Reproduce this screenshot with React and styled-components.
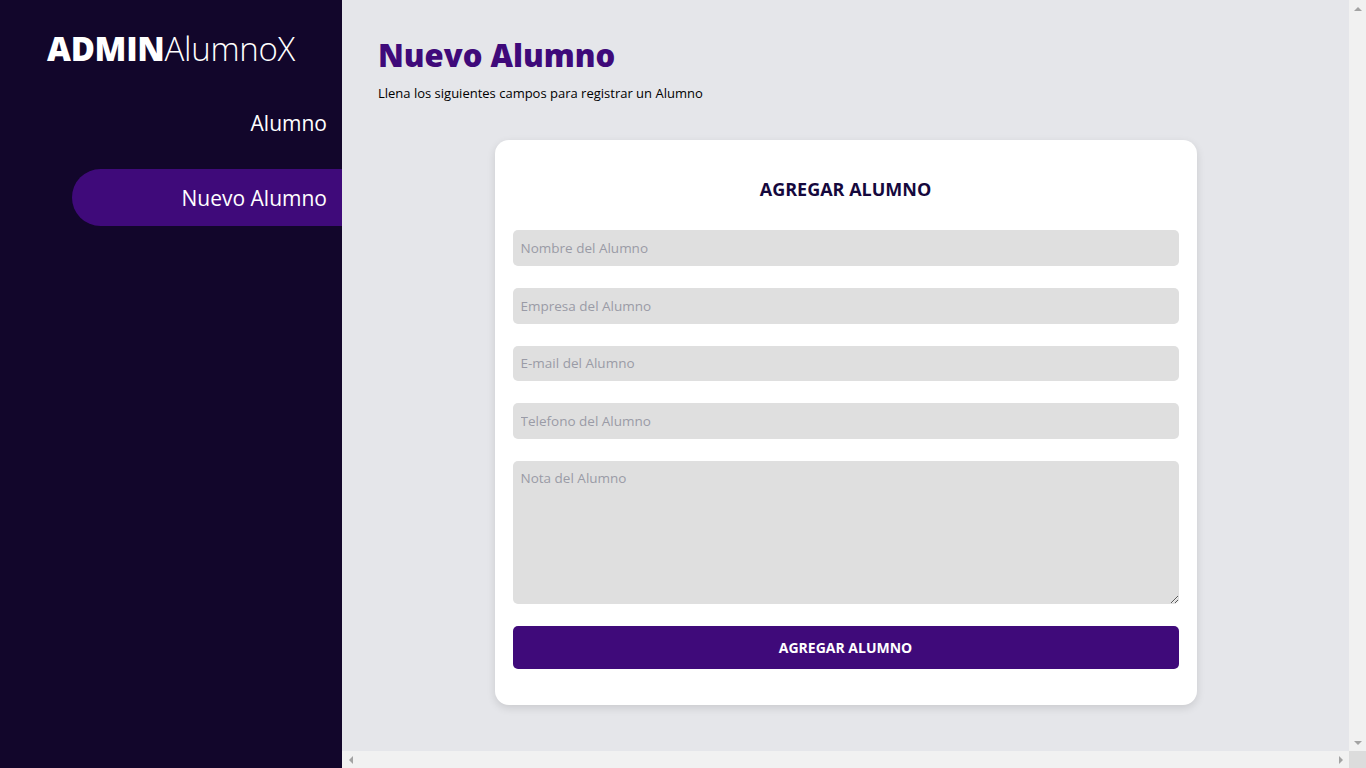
import React from "react";
import styled, { createGlobalStyle } from "styled-components";

const GlobalStyle = createGlobalStyle`
  * {
    box-sizing: border-box;
  }
  body {
    margin: 0;
    font-family: "Open Sans", "Noto Sans", sans-serif;
  }
`;

const Layout = styled.div`
  display: flex;
  height: 100vh;
  overflow: hidden;
`;

const Sidebar = styled.aside`
  width: 342px;
  flex-shrink: 0;
  background: #12062b;
  color: #fff;
  padding-top: 28px;
  .logo {
    text-align: center;
    font-size: 33px;
    font-weight: 300;
    line-height: 42px;
    letter-spacing: -0.3px;
    margin: 0 0 24px;
    span {
      font-weight: 800;
    }
  }
`;

const NavList = styled.nav`
  display: flex;
  flex-direction: column;
  align-items: flex-end;
  gap: 18px;
`;

const NavItem = styled.a`
  display: flex;
  align-items: center;
  justify-content: flex-end;
  width: 270px;
  height: 57px;
  padding-right: 15px;
  font-size: 21px;
  font-weight: 400;
  color: #fff;
  text-decoration: none;
  border-radius: 29px 0 0 29px;
  background: ${(props) => (props.$active ? "#3f0a7a" : "transparent")};
`;

/* main panel with its (always shown) scroll tracks */
const MainArea = styled.div`
  flex: 1;
  display: grid;
  grid-template-columns: 1fr 17px;
  grid-template-rows: 1fr 17px;
  background: #f1f1f1;
`;

const ScrollTrack = styled.div`
  background: #f1f1f1;
  display: flex;
  flex-direction: ${(props) => (props.$vertical ? "column" : "row")};
  justify-content: space-between;
  align-items: center;
`;

const ScrollCorner = styled.div`
  background: #dcdcdc;
`;

const Arrow = styled.span`
  width: 17px;
  height: 17px;
  display: flex;
  align-items: center;
  justify-content: center;
  &::after {
    content: "";
    width: 0;
    height: 0;
    border: 4px solid transparent;
    ${(props) => props.$dir === "up" && "border-bottom-color: #a3a3a3; margin-top: -4px;"}
    ${(props) => props.$dir === "down" && "border-top-color: #a3a3a3; margin-top: 4px;"}
    ${(props) => props.$dir === "left" && "border-right-color: #a3a3a3; margin-left: -4px;"}
    ${(props) => props.$dir === "right" && "border-left-color: #a3a3a3; margin-left: 4px;"}
  }
`;

const Main = styled.main`
  overflow: hidden;
  background: #e5e6ea;
  padding: 32px 36px 40px;
  .title {
    margin: 0;
    font-size: 31px;
    font-weight: 800;
    color: #3f0a7a;
    line-height: 46px;
  }
  .subtitle {
    margin: 6px 0 0;
    font-size: 13px;
    color: #000;
  }
`;

const Card = styled.form`
  width: 702px;
  margin: 38px auto 0;
  background: #fff;
  border-radius: 14px;
  box-shadow: 0 3px 8px rgba(0, 0, 0, 0.12);
  padding: 36px 18px 36px;
  display: flex;
  flex-direction: column;
  gap: 22px;
  h2 {
    margin: 0 0 6px;
    text-align: center;
    font-size: 18px;
    font-weight: 700;
    color: #15083d;
    line-height: 26px;
  }
`;

const Field = styled.input`
  width: 100%;
  height: 35.75px;
  flex-shrink: 0;
  border: none;
  outline: none;
  border-radius: 5px;
  background: #dfdfdf;
  padding: 0 8px;
  font-family: inherit;
  font-size: 13.5px;
  color: #333;
  &::placeholder {
    color: #9a9ba6;
  }
`;

const Note = styled(Field).attrs({ as: "textarea" })`
  height: 143px;
  padding: 8px;
  resize: vertical;
  display: block;
`;

const Submit = styled.button`
  height: 43px;
  border: none;
  border-radius: 5px;
  background: #3f0a7a;
  color: #fff;
  font-family: inherit;
  font-size: 14px;
  font-weight: 700;
  cursor: pointer;
`;

const navItems = [
  { id: 1, title: "Alumno" },
  { id: 2, title: "Nuevo Alumno", active: true },
];

const fields = [
  "Nombre del Alumno",
  "Empresa del Alumno",
  "E-mail del Alumno",
  "Telefono del Alumno",
];

export default function App() {
  return (
    <Layout>
      <GlobalStyle />
      <Sidebar>
        <p className="logo">
          <span>ADMIN</span>AlumnoX
        </p>
        <NavList>
          {navItems.map((item) => (
            <NavItem key={item.id} href="#" $active={item.active}>
              {item.title}
            </NavItem>
          ))}
        </NavList>
      </Sidebar>
      <MainArea>
        <Main>
          <h1 className="title">Nuevo Alumno</h1>
          <p className="subtitle">Llena los siguientes campos para registrar un Alumno</p>
          <Card onSubmit={(e) => e.preventDefault()}>
            <h2>AGREGAR ALUMNO</h2>
            {fields.map((f) => (
              <Field key={f} type="text" placeholder={f} />
            ))}
            <Note placeholder="Nota del Alumno" />
            <Submit type="submit">AGREGAR ALUMNO</Submit>
          </Card>
        </Main>
        <ScrollTrack $vertical>
          <Arrow $dir="up" />
          <Arrow $dir="down" />
        </ScrollTrack>
        <ScrollTrack>
          <Arrow $dir="left" />
          <Arrow $dir="right" />
        </ScrollTrack>
        <ScrollCorner />
      </MainArea>
    </Layout>
  );
}
